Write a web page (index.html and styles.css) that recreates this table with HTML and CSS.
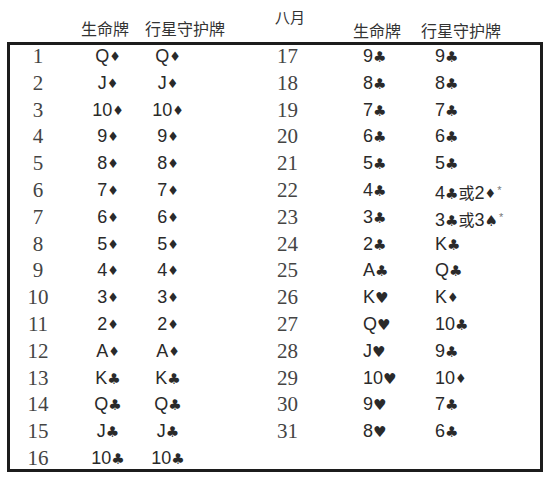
FILE: index.html
```html
<!DOCTYPE html>
<html lang="zh">
<head>
<meta charset="utf-8">
<link rel="stylesheet" href="styles.css">
</head>
<body>
<div class="head">
  <span class="h hl1">生命牌</span>
  <span class="h hl2">行星守护牌</span>
  <span class="h month">八月</span>
  <span class="h hr1">生命牌</span>
  <span class="h hr2">行星守护牌</span>
</div>
<div class="box">
  <div class="grid">
    <div class="n">1</div><div class="c">Q<span class="s">♦</span></div><div class="c">Q<span class="s">♦</span></div>
    <div class="rn">17</div><div class="r">9<span class="s k">♣</span></div><div class="r">9<span class="s k">♣</span></div>

    <div class="n">2</div><div class="c">J<span class="s">♦</span></div><div class="c">J<span class="s">♦</span></div>
    <div class="rn">18</div><div class="r">8<span class="s k">♣</span></div><div class="r">8<span class="s k">♣</span></div>

    <div class="n">3</div><div class="c">10<span class="s">♦</span></div><div class="c">10<span class="s">♦</span></div>
    <div class="rn">19</div><div class="r">7<span class="s k">♣</span></div><div class="r">7<span class="s k">♣</span></div>

    <div class="n">4</div><div class="c">9<span class="s">♦</span></div><div class="c">9<span class="s">♦</span></div>
    <div class="rn">20</div><div class="r">6<span class="s k">♣</span></div><div class="r">6<span class="s k">♣</span></div>

    <div class="n">5</div><div class="c">8<span class="s">♦</span></div><div class="c">8<span class="s">♦</span></div>
    <div class="rn">21</div><div class="r">5<span class="s k">♣</span></div><div class="r">5<span class="s k">♣</span></div>

    <div class="n">6</div><div class="c">7<span class="s">♦</span></div><div class="c">7<span class="s">♦</span></div>
    <div class="rn">22</div><div class="r">4<span class="s k">♣</span></div><div class="r">4<span class="s k">♣</span><span class="or">或</span>2<span class="s">♦</span><span class="star">*</span></div>

    <div class="n">7</div><div class="c">6<span class="s">♦</span></div><div class="c">6<span class="s">♦</span></div>
    <div class="rn">23</div><div class="r">3<span class="s k">♣</span></div><div class="r">3<span class="s k">♣</span><span class="or">或</span>3<span class="s k">♠</span><span class="star">*</span></div>

    <div class="n">8</div><div class="c">5<span class="s">♦</span></div><div class="c">5<span class="s">♦</span></div>
    <div class="rn">24</div><div class="r">2<span class="s k">♣</span></div><div class="r">K<span class="s k">♣</span></div>

    <div class="n">9</div><div class="c">4<span class="s">♦</span></div><div class="c">4<span class="s">♦</span></div>
    <div class="rn">25</div><div class="r">A<span class="s k">♣</span></div><div class="r">Q<span class="s k">♣</span></div>

    <div class="n">10</div><div class="c">3<span class="s">♦</span></div><div class="c">3<span class="s">♦</span></div>
    <div class="rn">26</div><div class="r">K<span class="s k">♥</span></div><div class="r">K<span class="s">♦</span></div>

    <div class="n">11</div><div class="c">2<span class="s">♦</span></div><div class="c">2<span class="s">♦</span></div>
    <div class="rn">27</div><div class="r">Q<span class="s k">♥</span></div><div class="r">10<span class="s k">♣</span></div>

    <div class="n">12</div><div class="c">A<span class="s">♦</span></div><div class="c">A<span class="s">♦</span></div>
    <div class="rn">28</div><div class="r">J<span class="s k">♥</span></div><div class="r">9<span class="s k">♣</span></div>

    <div class="n">13</div><div class="c">K<span class="s k">♣</span></div><div class="c">K<span class="s k">♣</span></div>
    <div class="rn">29</div><div class="r">10<span class="s k">♥</span></div><div class="r">10<span class="s">♦</span></div>

    <div class="n">14</div><div class="c">Q<span class="s k">♣</span></div><div class="c">Q<span class="s k">♣</span></div>
    <div class="rn">30</div><div class="r">9<span class="s k">♥</span></div><div class="r">7<span class="s k">♣</span></div>

    <div class="n">15</div><div class="c">J<span class="s k">♣</span></div><div class="c">J<span class="s k">♣</span></div>
    <div class="rn">31</div><div class="r">8<span class="s k">♥</span></div><div class="r">6<span class="s k">♣</span></div>

    <div class="n">16</div><div class="c">10<span class="s k">♣</span></div><div class="c">10<span class="s k">♣</span></div>
    <div class="rn"></div><div class="r"></div><div class="r"></div>
  </div>
</div>
</body>
</html>
```
FILE: styles.css
```css
html, body {
  margin: 0;
  padding: 0;
  background: #ffffff;
}
body {
  width: 551px;
  height: 479px;
  overflow: hidden;
  color: #222;
  font-family: "Liberation Sans", Arial, sans-serif;
}
.head {
  display: flex;
  align-items: flex-start;
  height: 42px;
}
.h {
  font-family: "Noto Sans CJK SC", "Noto Sans", sans-serif;
  font-size: 16px;
  line-height: 20px;
  color: #333;
  white-space: nowrap;
}
.hl1 { margin-left: 81px; margin-top: 18px; }
.hl2 { margin-left: 16px; margin-top: 18px; }
.month { margin-left: 50px; margin-top: 7px; font-size: 15px; }
.hr1 { margin-left: 48px; margin-top: 20px; }
.hr2 { margin-left: 20px; margin-top: 20px; }
.box {
  margin-left: 7px;
  width: 530px;
  height: 424px;
  border: 3px solid #1c1c1c;
}
.grid {
  margin-top: -2px;
  display: grid;
  grid-template-columns: 56px 84px 36px 177px 72px 1fr;
  grid-auto-rows: 26.8px;
  line-height: 26.8px;
  white-space: nowrap;
}
.n, .rn {
  font-family: "Liberation Serif", "Times New Roman", serif;
  font-size: 21px;
  color: #444;
}
.n { text-align: center; }
.rn { padding-left: 91px; }
.c, .r {
  font-size: 18px;
  color: #2a2a2a;
}
.c { text-align: center; }
.r { text-align: left; }
.s {
  font-family: "DejaVu Sans", sans-serif;
  font-size: 13px;
  vertical-align: 1px;
}
.s.k {
  font-size: 15px;
  vertical-align: 0;
}
.or {
  font-family: "Noto Sans CJK SC", sans-serif;
  font-size: 16px;
}
.star {
  font-size: 11px;
  color: #777;
  vertical-align: 5px;
  margin-left: 1px;
}
```
